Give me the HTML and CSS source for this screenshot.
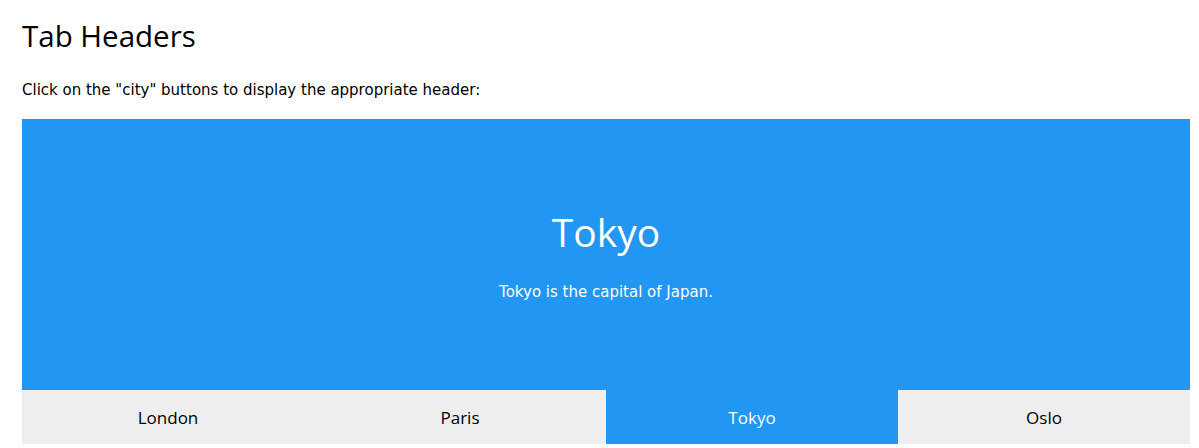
FILE: index.html
```html
<!DOCTYPE html>
<html>
<head>
<meta charset="utf-8">
<link rel="stylesheet" href="styles.css">
</head>
<body>
<main class="page">
  <h1 class="title">Tab Headers</h1>
  <p class="intro">Click on the "city" buttons to display the appropriate header:</p>
  <section class="tabs">
    <div class="content">
      <h2 class="city">Tokyo</h2>
      <p class="desc">Tokyo is the capital of Japan.</p>
    </div>
    <nav class="tablinks">
      <button class="tablink">London</button>
      <button class="tablink">Paris</button>
      <button class="tablink active">Tokyo</button>
      <button class="tablink">Oslo</button>
    </nav>
  </section>
</main>
</body>
</html>
```
FILE: styles.css
```css
html, body {
  margin: 0;
  padding: 0;
  background: #fff;
  color: #000;
}
.page {
  padding: 0 0 0 22px;
}
.title {
  margin: 16px 0 0;
  font-family: "Open Sans", "Noto Sans", sans-serif;
  font-weight: 400;
  font-size: 29.5px;
  line-height: 40px;
}
.intro {
  margin: 24px 0 19px;
  font-family: "DejaVu Sans", Verdana, sans-serif;
  font-size: 15px;
  line-height: 20px;
}
.tabs {
  width: 1168px;
}
.content {
  box-sizing: border-box;
  height: 271px;
  padding-top: 88px;
  background: #2196F3;
  color: #fff;
  text-align: center;
}
.city {
  margin: 0;
  font-family: "Open Sans", "Noto Sans", sans-serif;
  font-weight: 400;
  font-size: 39px;
  line-height: 50px;
}
.desc {
  margin: 25px 0 0;
  font-family: "DejaVu Sans", Verdana, sans-serif;
  font-size: 15px;
  line-height: 20px;
}
.tablinks {
  display: flex;
}
.tablink {
  flex: 1 1 0;
  height: 54px;
  border: none;
  margin: 0;
  padding: 0;
  background: #eee;
  color: #000;
  font-family: "Open Sans", "Noto Sans", sans-serif;
  font-size: 17px;
}
.tablink.active {
  background: #2196F3;
  color: #fff;
}
```
